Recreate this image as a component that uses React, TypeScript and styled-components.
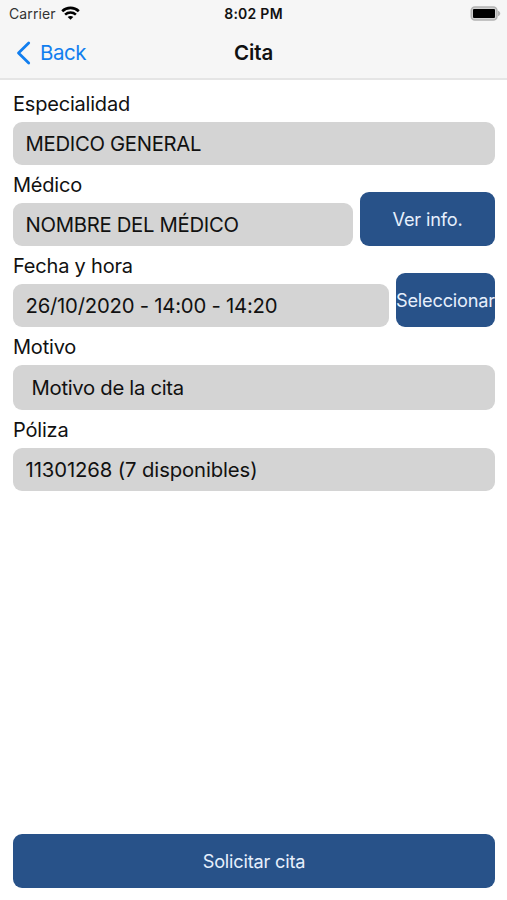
import React from "react";
import styled, { createGlobalStyle } from "styled-components";

const Global = createGlobalStyle`
  * { box-sizing: border-box; }
  body { margin: 0; background: #fff; font-family: Inter, sans-serif; color: #111; }
`;
const Screen = styled.main`
  width: 507px; height: 900px; display: flex; flex-direction: column; overflow: hidden;
`;
const Header = styled.header`
  height: 80px; background: #f6f6f6; border-bottom: 2px solid #e5e5e5; flex: none;
`;
const Bar = styled.div<{ $h: number }>`
  height: ${(p) => p.$h}px; display: grid; grid-template-columns: 1fr auto 1fr; align-items: center;
`;
const Carrier = styled.div`
  display: flex; align-items: center; gap: 5px; padding-left: 9px; font-size: 14px; line-height: 17px;
  letter-spacing: 0.1px; color: #333;
`;
const Wifi = styled.svg`margin-top: -2px;`;
const Clock = styled.div`font-size: 14px; font-weight: 600; letter-spacing: 0.25px;`;
const Battery = styled.div`justify-self: end; padding-right: 6px; display: flex;`;
const Back = styled.a`
  display: flex; align-items: center; gap: 9px; padding-left: 16px; color: #117eef; font-size: 20.5px;
  line-height: 24px; letter-spacing: -0.5px;
`;
const Chevron = styled.svg`margin-top: -1px;`;
const Title = styled.h1`margin: -1px 0 0; font-size: 20.5px; font-weight: 600; letter-spacing: -0.1px;`;
const Form = styled.section`padding: 11px 12px 0 13px; flex: 1;`;
const Row = styled.div<{ $h: number }>`display: flex; height: ${(p) => p.$h}px; gap: 7px;`;
const Field = styled.div`flex: 1; min-width: 0;`;
const Label = styled.div`font-size: 20px; line-height: 27px; height: 31px; letter-spacing: -0.2px;`;
const Value = styled.div<{ $h?: number; $pad?: number; $ls?: number }>`
  height: ${(p) => p.$h ?? 43}px; padding-left: ${(p) => p.$pad ?? 12.5}px; border-radius: 9px;
  background: #d4d4d4; display: flex; align-items: center; font-size: 20.3px; white-space: nowrap;
  letter-spacing: ${(p) => p.$ls ?? -0.3}px;
`;
const Button = styled.button<{ $w?: number }>`
  width: ${(p) => (p.$w ? p.$w + "px" : "100%")}; height: 54px; padding: 0; border: 0; border-radius: 9px;
  background: #285289; color: #e6effc; font: 18.2px Inter, sans-serif; letter-spacing: -0.2px;
  white-space: nowrap; display: flex; align-items: center; justify-content: center;
`;
const Side = styled.div`padding-top: 20px;`;
const Footer = styled.footer`padding: 0 12px 12px 13px;`;

export default function App() {
  return (
    <Screen>
      <Global />
      <Header>
        <Bar $h={27}>
          <Carrier>
            Carrier
            <Wifi width="19" height="14" viewBox="0 0 19 14" fill="none" stroke="#000" strokeWidth="2.6">
              <path d="M1.2 5.2C5.800.700 13.200.700 17.800 5.200M4.100 8.600c3.100-2.800 7.700-2.800 10.800 0" />
              <path d="M9.500 13.800 6.700 11c1.600-1.500 4-1.500 5.600 0z" fill="#000" stroke="none" />
            </Wifi>
          </Carrier>
          <Clock>8:02 PM</Clock>
          <Battery>
            <svg width="31" height="15" viewBox="0 0 31 15">
              <rect x="1.300" y="1" width="25.600" height="13" rx="3.600" fill="#d2d2d2" stroke="#b2b2b2" strokeWidth="1.600" />
              <rect x="3" y="3" width="22" height="9" rx="1" />
              <path d="M28 4.800v5.400c3-1.200 3-4.200 0-5.400" fill="#b2b2b2" />
            </svg>
          </Battery>
        </Bar>
        <Bar $h={52}>
          <Back>
            <Chevron width="15" height="24" viewBox="0 0 15 24" fill="none" stroke="#117eef" strokeWidth="2.800" strokeLinecap="round" strokeLinejoin="round">
              <path d="M12.700 2 2.500 12l10.200 10" />
            </Chevron>
            <span>Back</span>
          </Back>
          <Title>Cita</Title>
        </Bar>
      </Header>
      <Form>
        <Row $h={81}><Field><Label>Especialidad</Label><Value>MEDICO GENERAL</Value></Field></Row>
        <Row $h={81}>
          <Field><Label>Médico</Label><Value>NOMBRE DEL MÉDICO</Value></Field>
          <Side><Button $w={135}>Ver info.</Button></Side>
        </Row>
        <Row $h={81}>
          <Field><Label>Fecha y hora</Label><Value $ls={-0.22}>26/10/2020 - 14:00 - 14:20</Value></Field>
          <Side><Button $w={99}>Seleccionar</Button></Side>
        </Row>
        <Row $h={83}><Field><Label>Motivo</Label><Value $h={45} $pad={18.5} $ls={-0.3}>Motivo de la cita</Value></Field></Row>
        <Row $h={81}><Field><Label>Póliza</Label><Value $ls={-0.11}>11301268 (7 disponibles)</Value></Field></Row>
      </Form>
      <Footer><Button>Solicitar cita</Button></Footer>
    </Screen>
  );
}
